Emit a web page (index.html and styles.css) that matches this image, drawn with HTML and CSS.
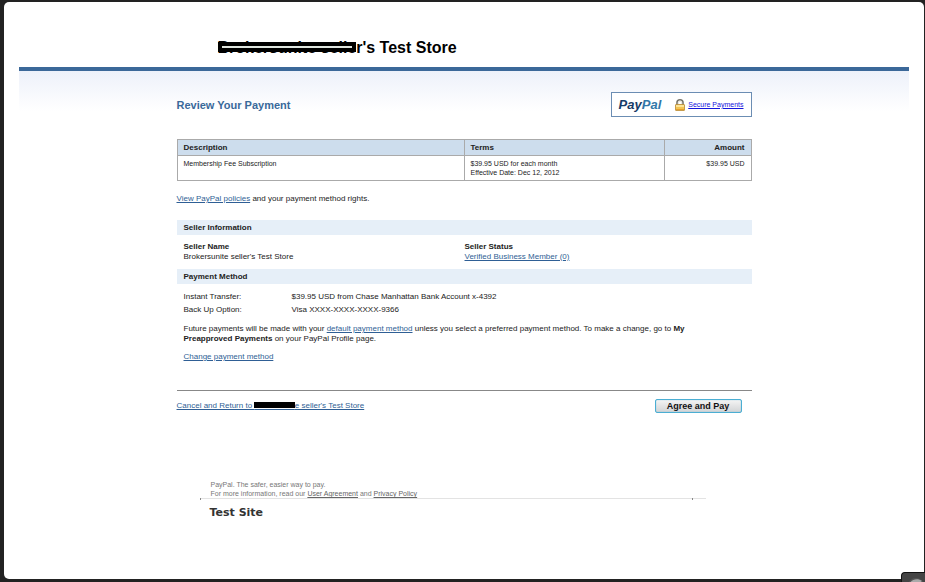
FILE: index.html
```html
<!DOCTYPE html>
<html lang="en">
  <head>
    <meta charset="UTF-8" />
    <meta name="viewport" content="width=device-width, initial-scale=1.0" />
    <title>Review Your Payment</title>
    <link rel="stylesheet" href="styles.css">
  </head>
  <body>
    <div class="panel">
      <header class="store-header">
        <h1 class="wrap"><span class="masked masked-title">Brokersunite selle</span>r's Test Store</h1>
      </header>

      <div class="page">
        <main class="wrap">
          <div class="title-row">
            <h2>Review Your Payment</h2>
            <div class="secure-box">
              <span class="paypal-logo"><span class="pay">Pay</span><span class="pal">Pal</span></span>
              <svg class="lock" viewBox="0 0 10 12" width="10" height="12" aria-hidden="true">
                <path d="M2 7V3.5C2 1.6 3.1.8 5 .8s3 .8 3 2.700V7" fill="none" stroke="#77746a" stroke-width="1.600" />
                <path d="M3.300 6V3.700C3.300 2.600 3.800 2.200 5 2.200s1.700.4 1.700 1.500V6" fill="none" stroke="#d8d6cd" stroke-width=".7" />
                <rect x=".5" y="5.500" width="9" height="6" rx=".5" fill="#f5c552" stroke="#b98a35" stroke-width=".8" />
                <path d="M1 7h8" stroke="#fff1b8" stroke-width="1.400" />
                <path d="M1 10.500h8" stroke="#e79f2d" />
              </svg>
              <a href="#">Secure Payments</a>
            </div>
          </div>

          <table class="terms">
            <thead>
              <tr>
                <th>Description</th>
                <th>Terms</th>
                <th class="amount">Amount</th>
              </tr>
            </thead>
            <tbody>
              <tr>
                <td>Membership Fee Subscription</td>
                <td>$39.95 USD for each month<br>Effective Date: Dec 12, 2012</td>
                <td class="amount">$39.95 USD</td>
              </tr>
            </tbody>
          </table>

          <p class="policies"><a href="#">View PayPal policies</a> and your payment method rights.</p>

          <h3>Seller Information</h3>
          <div class="seller">
            <div>
              <strong>Seller Name</strong>
              <div>Brokersunite seller's Test Store</div>
            </div>
            <div>
              <strong>Seller Status</strong>
              <div><a href="#">Verified Business Member (0)</a></div>
            </div>
          </div>

          <h3>Payment Method</h3>
          <div class="method">
            <dl>
              <dt>Instant Transfer:</dt>
              <dd>$39.95 USD from Chase Manhattan Bank Account x-4392</dd>
              <dt>Back Up Option:</dt>
              <dd>Visa XXXX-XXXX-XXXX-9366</dd>
            </dl>
            <p>Future payments will be made with your <a href="#">default payment method</a> unless you select a preferred payment method. To make a change, go to <strong>My Preapproved Payments</strong> on your PayPal Profile page.</p>
            <p><a href="#">Change payment method</a></p>
          </div>

          <div class="actions">
            <a href="#">Cancel and Return to <span class="masked masked-link">Brokersunit</span>e seller's Test Store</a>
            <button type="button">Agree and Pay</button>
          </div>
        </main>

        <footer class="wrap">
          <p>PayPal. The safer, easier way to pay.<br>For more information, read our <a href="#">User Agreement</a> and <a href="#">Privacy Policy</a></p>
          <div class="site">Test Site</div>
        </footer>
      </div>
    </div>

    <button type="button" class="corner" aria-label="Close">
      <svg viewBox="0 0 24 24" width="24" height="24" aria-hidden="true">
        <circle cx="14" cy="13" r="8" fill="#555" />
        <path d="M8 10c2-4 8-5 12-2l-3 2h-7z" fill="#aaa" />
      </svg>
    </button>
  </body>
</html>
```

FILE: styles.css
```css
* {
  box-sizing: border-box;
}

body {
  margin: 0;
  padding: 2px 1px 3px 4px;
  min-height: 100vh;
  display: flex;
  overflow-x: hidden;
  background-color: #222;
  font-family: "Liberation Sans", Arial, sans-serif;
  font-size: 8px;
  line-height: 10px;
  color: #222;
}

h1,
h2,
h3,
p,
dl,
dd {
  margin: 0;
}

a {
  color: #2f5f95;
}

.panel {
  flex: 1;
  padding: 0 15px;
  background-color: #fff;
  border-radius: 5px;
}

.wrap {
  width: 100%;
  max-width: 575px;
  margin: 0 auto;
}

.store-header {
  padding: 36px 0 9px;
  border-bottom: 4px solid #3b6899;
}

h1 {
  padding-left: 41px;
  font-size: 16px;
  line-height: 20px;
  color: #000;
}

/* Blacked out part of the store name */
.masked {
  position: relative;
}

.masked::after {
  content: "";
  position: absolute;
  background-color: #000;
}

.masked-title::after {
  left: 0;
  right: 0;
  top: 3px;
  height: 10px;
  background: linear-gradient(#dfe5df, #dfe5df) center / calc(100% - 8px) 2px no-repeat #000;
}

.masked-link::after {
  left: 0;
  right: 0;
  top: 1px;
  height: 6px;
}

.page {
  background: linear-gradient(#edf1fa, #fff 40px);
}

.title-row {
  display: flex;
  justify-content: space-between;
  align-items: center;
  padding: 21px 0 22px;
}

h2 {
  font-size: 11px;
  line-height: 16px;
  color: #39699a;
}

.secure-box {
  display: flex;
  align-items: center;
  height: 25px;
  padding: 0 7px;
  border: 1px solid #6b8db3;
  background-color: #fff;
}

.secure-box a {
  margin-left: 3px;
  font-size: 7px;
  color: #1515dc;
}

.paypal-logo {
  margin-right: 14px;
  font-size: 13px;
  font-style: italic;
  font-weight: bold;
}

.pay {
  color: #173b68;
}

.pal {
  color: #3277a8;
}

.terms {
  width: 100%;
  border-collapse: collapse;
  table-layout: fixed;
  font-size: 7px;
  line-height: 9px;
}

.terms th,
.terms td {
  padding: 3px 6px;
  border: 1px solid #aaa;
  text-align: left;
  vertical-align: top;
}

.terms th {
  width: 35%;
  background-color: #cddded;
  font-size: 8px;
}

.terms th:first-child {
  width: 50%;
}

.terms th.amount {
  width: 15%;
}

.terms .amount {
  text-align: right;
}

.policies {
  padding: 13px 0 16px;
}

h3 {
  padding: 3px 7px 2px;
  background-color: #e6eff8;
  font-size: 8px;
  line-height: 10px;
}

.seller {
  display: grid;
  grid-template-columns: calc(50% - 3px) 1fr;
  padding: 7px 0 7px 7px;
}

.method {
  padding: 6px 40px 28px 7px;
}

dl {
  display: grid;
  grid-template-columns: 108px 1fr;
  line-height: 13px;
}

.method p {
  padding-top: 8px;
}

.actions {
  display: flex;
  justify-content: space-between;
  align-items: center;
  padding: 8px 10px 0 0;
  border-top: 1px solid #888;
}

.actions button {
  width: 87px;
  height: 14px;
  padding: 0;
  border: 1px solid #4baed3;
  border-radius: 2px;
  box-shadow: inset 0 0 1px #4baed3;
  background: linear-gradient(#f4f4f4, #d2d4d6);
  font-family: inherit;
  font-size: 9px;
  font-weight: bold;
  line-height: 10px;
  color: #111;
}

footer {
  padding: 67px 46px 0 23px;
  font-size: 7px;
  line-height: 9px;
  color: #777;
}

footer p {
  position: relative;
  padding-left: 11px;
  border-bottom: 1px solid #e3e3e3;
}

/* Small marks on the footer rule */
footer p::before,
footer p::after {
  content: "";
  position: absolute;
  bottom: -2px;
  width: 1px;
  height: 2px;
  background-color: #888;
}

footer p::before {
  left: 0;
}

footer p::after {
  right: 13px;
}

footer a {
  color: #666;
}

.site {
  padding: 7px 0 0 10px;
  font-family: "DejaVu Sans", Verdana, sans-serif;
  font-size: 11px;
  font-weight: bold;
  line-height: 14px;
  color: #333;
}

.corner {
  position: fixed;
  right: 0;
  bottom: 0;
  width: 24px;
  height: 10px;
  padding: 0;
  overflow: hidden;
  border: 1px solid #111;
  border-width: 1px 0 0 1px;
  border-radius: 4px 0 0 0;
  background-color: #444;
}

.corner svg {
  display: block;
}
```
